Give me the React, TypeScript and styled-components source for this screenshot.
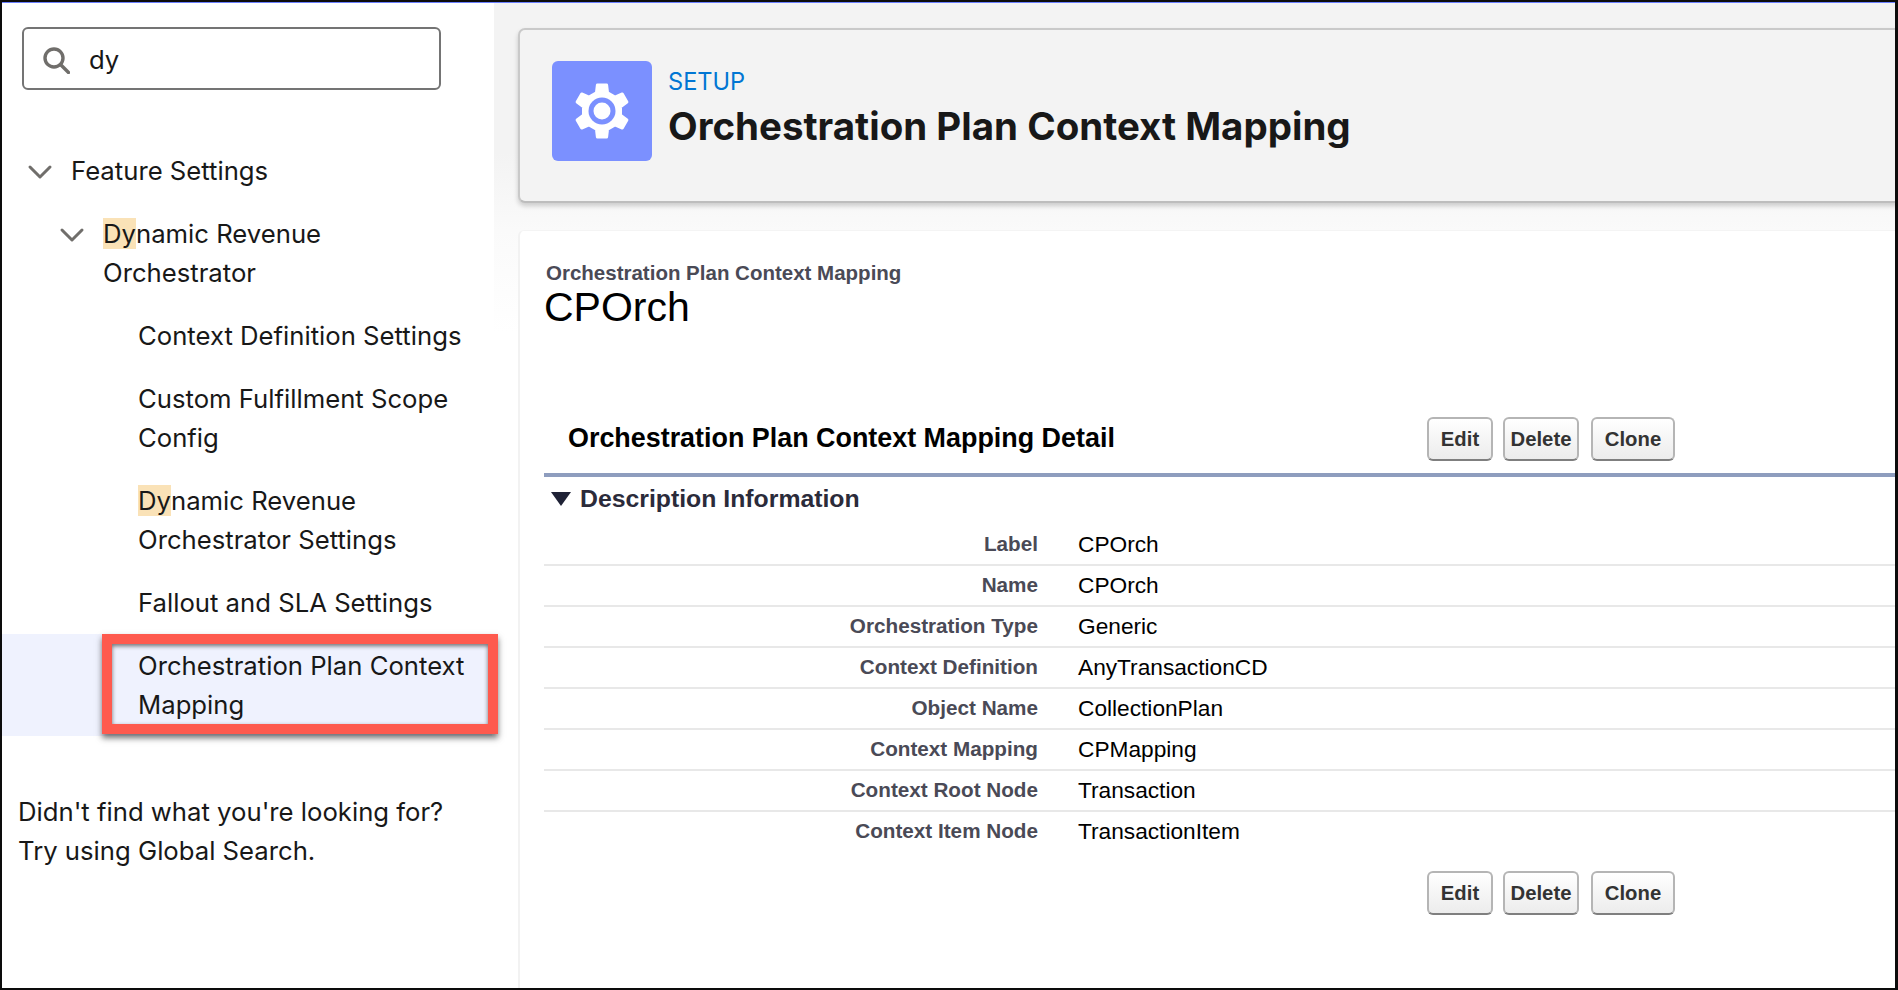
import React from "react";
import styled, { createGlobalStyle } from "styled-components";
import { ChevronDown } from "lucide-react";

const GlobalStyle = createGlobalStyle`
  html, body { margin: 0; padding: 0; background: #fff; }
  * { box-sizing: border-box; }
`;

const Frame = styled.div`
  width: 1898px;
  height: 990px;
  overflow: hidden;
  display: flex;
  padding-top: 1px;
  background: #6b80ff;
  border-left: 2px solid #0c0c0c;
  border-right: 3px solid #0c0c0c;
  border-bottom: 2px solid #0c0c0c;
  border-top: 2px solid #0c0c0c;
`;

const Sidebar = styled.aside`
  position: relative;
  z-index: 1;
  width: 492px;
  flex: none;
  display: flex;
  flex-direction: column;
  background: #fff;
  font-family: Inter, "Noto Sans", sans-serif;
  font-size: 25.7px;
  line-height: 39px;
  color: #181818;
`;

const SearchBox = styled.div`
  width: 419px;
  height: 63px;
  margin: 24px 0 0 20px;
  padding-left: 19px;
  display: flex;
  align-items: center;
  gap: 19px;
  border: 2px solid #747474;
  border-radius: 6px;
`;

const SearchIcon = styled.svg`
  margin-top: 4px;
`;

const SearchValue = styled.span`
  padding-top: 2px;
`;

const Tree = styled.div`
  margin-top: 61px;
  display: flex;
  flex-direction: column;
  gap: 24px;
`;

const TreeRow = styled.div<{ $indent: number }>`
  display: flex;
  align-items: flex-start;
  padding-left: ${(p) => p.$indent}px;
`;

const Chevron = styled(ChevronDown)`
  flex: none;
  width: 40px;
  height: 40px;
  margin: 1px 11px -2px 0;
  color: #706e6b;
`;

const Mark = styled.span`
  background: #fae2b7;
`;

const SelectedRow = styled.div`
  position: relative;
  width: 490px;
  height: 102px;
  margin-top: 12px;
  padding: 12px 0 0 136px;
  white-space: nowrap;
  background: #eff2fe;
`;

const Callout = styled.div`
  position: absolute;
  left: 100px;
  top: 0;
  width: 396px;
  height: 100px;
  border: 10px solid #fe5a4e;
  box-shadow: 0 4px 6px rgba(40, 40, 40, 0.65), inset 0 2px 4px rgba(40, 40, 40, 0.65);
`;

const Hint = styled.p`
  margin: 56px 0 0 16px;
`;

const Main = styled.main`
  flex: 1;
  min-width: 0;
  padding: 25px 0 0 24px;
  background: linear-gradient(#f3f3f3 0, #f3f3f3 150px, #fafafa 227px, #fff 330px);
`;

const HeaderCard = styled.header`
  height: 175px;
  display: flex;
  gap: 16px;
  padding: 31px 0 0 32px;
  margin-right: -10px;
  background: #f3f3f3;
  border: 2px solid #c9c9c9;
  border-bottom-color: #bdbdbd;
  border-radius: 7px;
  box-shadow: 0 3px 5px rgba(0, 0, 0, 0.18);
  font-family: Inter, "Noto Sans", sans-serif;
`;

const IconTile = styled.div`
  width: 100px;
  height: 100px;
  display: flex;
  align-items: center;
  justify-content: center;
  background: #7b90ff;
  border-radius: 6px;
`;

const Eyebrow = styled.div`
  margin-top: 5px;
  font-size: 23.6px;
  line-height: 32px;
  color: #0176d3;
`;

const PageTitle = styled.h1`
  margin: 4px 0 0;
  font-size: 38.5px;
  line-height: 48px;
  font-weight: 700;
  color: #181818;
`;

const Sheet = styled.section`
  margin: 27px -10px 0 0;
  height: 800px;
  padding: 29px 0 0 24px;
  background: #fff;
  border-left: 2px solid #f2f2f2;
  border-top: 1px solid #f4f4f4;
  border-radius: 6px 0 0 0;
  font-family: "Liberation Sans", Arial, sans-serif;
`;

const Breadcrumb = styled.div`
  padding-left: 2px;
  font-size: 20.5px;
  line-height: 26px;
  font-weight: 700;
  color: #4a4a56;
`;

const RecordName = styled.div`
  font-size: 41px;
  line-height: 42px;
  color: #000;
`;

const DetailHead = styled.div`
  display: flex;
  align-items: flex-start;
  margin-top: 74px;
  height: 75px;
  padding: 15px 0 0 24px;
  border-bottom: 4px solid #8e9dbe;
`;

const DetailTitle = styled.h2`
  width: 859px;
  flex: none;
  margin: 5px 0 0;
  font-size: 26.9px;
  line-height: 32px;
  font-weight: 700;
  color: #000;
`;

const Buttons = styled.div`
  display: flex;
  gap: 10px;

  & > :last-child {
    margin-left: 2px;
  }
`;

const BottomButtons = styled(Buttons)`
  margin: 18px 0 0 883px;
`;

const Btn = styled.button<{ $w: number }>`
  width: ${(p) => p.$w}px;
  height: 44px;
  padding: 0;
  font: 700 20.3px "Liberation Sans", Arial, sans-serif;
  color: #333;
  background: linear-gradient(#fff, #ececec);
  border: 2px solid #b5b5b5;
  border-bottom-color: #7f7f7f;
  border-radius: 6px;
`;

const SectionHead = styled.div`
  display: flex;
  align-items: center;
  gap: 9px;
  height: 48px;
  padding: 0 0 5px 7px;
  font-size: 24.8px;
  font-weight: 700;
  color: #2b2b3a;
`;

const Row = styled.div<{ $last?: boolean }>`
  display: flex;
  height: 41px;
  padding-top: 7px;
  border-bottom: 2px solid ${(p) => (p.$last ? "transparent" : "#e8e8e8")};
`;

const RowLabel = styled.div`
  width: 494px;
  flex: none;
  text-align: right;
  font-size: 20.7px;
  line-height: 24px;
  font-weight: 700;
  color: #4a4a56;
`;

const RowValue = styled.div`
  margin-left: 40px;
  font-size: 22.7px;
  line-height: 24px;
  color: #000;
`;

const rows: [string, string][] = [
  ["Label", "CPOrch"],
  ["Name", "CPOrch"],
  ["Orchestration Type", "Generic"],
  ["Context Definition", "AnyTransactionCD"],
  ["Object Name", "CollectionPlan"],
  ["Context Mapping", "CPMapping"],
  ["Context Root Node", "Transaction"],
  ["Context Item Node", "TransactionItem"],
];

// six teeth, one pointing straight up
const gearOutline = Array.from({ length: 6 }, (_, i) => {
  const at = (deg: number, r: number) => {
    const a = ((i * 60 - 90 + deg) * Math.PI) / 180;
    return `${(30 + r * Math.cos(a)).toFixed(2)} ${(30 + r * Math.sin(a)).toFixed(2)}`;
  };
  return `L${at(-17, 19)} L${at(-10, 26.5)} L${at(10, 26.5)} L${at(17, 19)}`;
})
  .join(" ")
  .replace("L", "M") + " Z";

function ActionButtons() {
  return (
    <>
      <Btn $w={66}>Edit</Btn>
      <Btn $w={76}>Delete</Btn>
      <Btn $w={84}>Clone</Btn>
    </>
  );
}

export default function App() {
  return (
    <Frame>
      <GlobalStyle />
      <Sidebar>
        <SearchBox>
          <SearchIcon width="27" height="27" viewBox="0 0 27 27" fill="none" stroke="#706e6b" strokeWidth="3.4">
            <circle cx="11" cy="11" r="9" />
            <path d="M17.5 17.5 25.5 25.5" strokeLinecap="round" />
          </SearchIcon>
          <SearchValue>dy</SearchValue>
        </SearchBox>
        <Tree>
          <TreeRow $indent={18}>
            <Chevron strokeWidth={1.8} />
            <span>Feature Settings</span>
          </TreeRow>
          <TreeRow $indent={50}>
            <Chevron strokeWidth={1.8} />
            <span>
              <Mark>Dy</Mark>namic Revenue
              <br />
              Orchestrator
            </span>
          </TreeRow>
          <TreeRow $indent={136}>Context Definition Settings</TreeRow>
          <TreeRow $indent={136}>
            <span>
              Custom Fulfillment Scope
              <br />
              Config
            </span>
          </TreeRow>
          <TreeRow $indent={136}>
            <span>
              <Mark>Dy</Mark>namic Revenue
              <br />
              Orchestrator Settings
            </span>
          </TreeRow>
          <TreeRow $indent={136}>Fallout and SLA Settings</TreeRow>
        </Tree>
        <SelectedRow>
          Orchestration Plan Context
          <br />
          Mapping
          <Callout />
        </SelectedRow>
        <Hint>
          Didn't find what you're looking for?
          <br />
          Try using Global Search.
        </Hint>
      </Sidebar>
      <Main>
        <HeaderCard>
          <IconTile>
            <svg width="60" height="60" viewBox="0 0 60 60">
              <path d={gearOutline} fill="#fff" stroke="#fff" strokeWidth="3" strokeLinejoin="round" />
              <circle cx="30" cy="30" r="13.500" fill="#7b90ff" />
              <circle cx="30" cy="30" r="8.500" fill="#fff" />
            </svg>
          </IconTile>
          <div>
            <Eyebrow>SETUP</Eyebrow>
            <PageTitle>Orchestration Plan Context Mapping</PageTitle>
          </div>
        </HeaderCard>
        <Sheet>
          <Breadcrumb>Orchestration Plan Context Mapping</Breadcrumb>
          <RecordName>CPOrch</RecordName>
          <DetailHead>
            <DetailTitle>Orchestration Plan Context Mapping Detail</DetailTitle>
            <Buttons>
              <ActionButtons />
            </Buttons>
          </DetailHead>
          <SectionHead>
            <svg width="20" height="14" viewBox="0 0 20 14">
              <path d="M0 0h20L10 14z" fill="#1f2236" />
            </svg>
            Description Information
          </SectionHead>
          {rows.map(([label, value], i) => (
            <Row key={label} $last={i === rows.length - 1}>
              <RowLabel>{label}</RowLabel>
              <RowValue>{value}</RowValue>
            </Row>
          ))}
          <BottomButtons>
            <ActionButtons />
          </BottomButtons>
        </Sheet>
      </Main>
    </Frame>
  );
}
